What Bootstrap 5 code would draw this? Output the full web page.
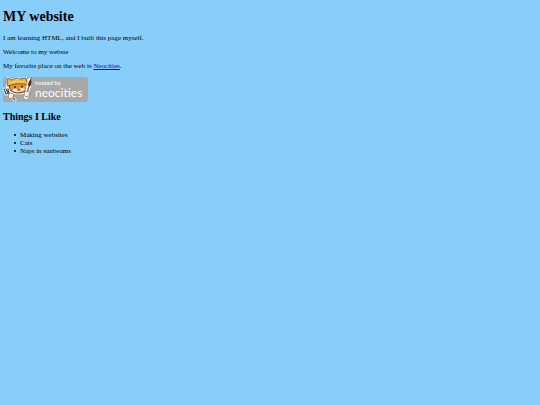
<!DOCTYPE html>
<html lang="en">
<head>
<meta charset="utf-8">
<meta name="viewport" content="width=device-width, initial-scale=1">
<title>MY website</title>
<link href="https://cdn.jsdelivr.net/npm/bootstrap@5.3.0/dist/css/bootstrap.min.css" rel="stylesheet">
<style>
body { background: #87cefa; color: #000; font: 7px/8px "Liberation Serif", "Times New Roman", serif; }
.page-body { padding: 8px 3px; }
h1 { font-size: 14px; line-height: 18px; }
h2 { font-size: 10px; line-height: 12px; }
h1, h2 { color: #000; margin-bottom: 8px; }
p { margin-bottom: 6px; }
.intro a { color: #00e; }
.likes { padding-left: 11px; }
.likes li { gap: 4px; }
.likes li::before { content: ""; width: 2px; height: 2px; border-radius: 1px; background: #000; }
.host-badge { margin: 7px 0 9px; width: 85px; }
.host-badge text { font-family: Lato, sans-serif; fill: #fff; }
</style>
<script src="https://cdn.jsdelivr.net/npm/bootstrap@5.3.0/dist/js/bootstrap.bundle.min.js" defer></script>
</head>
<body>
<main class="page-body">
  <h1 class="fw-bold">MY website</h1>
  <div class="intro">
    <p>I am learning HTML, and I built this page myself.</p>
    <p>Welcome to my webste</p>
    <p>My favorite place on the web is <a href="https://neocities.org">Neocities</a>.</p>
  </div>
  <a class="host-badge d-block" href="https://neocities.org" aria-label="Hosted by Neocities">
    <svg class="d-block w-100" viewBox="0 0 85 25" aria-hidden="true">
      <rect width="85" height="25" rx="3" fill="#a8a8a8"/>
      <text x="32" y="8" font-size="6">hosted by</text>
      <text x="32" y="20" font-size="12">neocities</text>
      <g stroke-linejoin="round" stroke-linecap="round">
        <!-- cat with a helmet -->
        <path d="M5 1 9 3Q14 0 18 2L23 1 24 6 27 10 23 15Q18 17 12 16L6 14 4 9Z" fill="#fff" stroke="#fff" stroke-width="2"/>
        <path d="M6 6 7 13Q10 16 15 16Q22 16 25 11L24 5 22 4 12 5Z" fill="#ed923b" stroke="#4a2a1a" stroke-width=".9"/>
        <path d="M9 13Q12 11 15 12Q19 10 22 12Q20 15 15 15Q12 16 9 13Z" fill="#fff0db"/>
        <path d="M5 9Q3 7 5 1L9 3Q13 0 18 2L23 1 24 5 25 8Q16 5 5 9Z" fill="#e9b63d" stroke="#6b4d18" stroke-width=".8"/>
        <path d="M7 6Q14 3 21 5M12 3 16 2" fill="none" stroke="#ffdf77" stroke-width=".8"/>
        <circle cx="12" cy="10" r=".9" fill="#24170f"/><circle cx="19" cy="9.5" r=".9" fill="#24170f"/>
        <path d="M15 12H17L16 13ZM16 13 14 14M16 13 18 14" fill="#513020" stroke="#513020" stroke-width=".5"/>
        <!-- fork and paintbrush -->
        <path d="M1 12 3 17 6 16 5 12M3 12 5 16 12 23" fill="none" stroke="#fff" stroke-width="3"/>
        <path d="M1 12 3 17 6 16 5 12M3 12 5 16 12 23" fill="none" stroke="#40566c" stroke-width="1.3"/>
        <path d="M27 3 23 20" fill="none" stroke="#fff" stroke-width="4"/>
        <path d="M26 9 23 20" fill="none" stroke="#785044" stroke-width="1.2"/>
        <path d="M28 2Q29 5 27 9L25 8Q26 5 28 2Z" fill="#7c1d30" stroke="#3c2028" stroke-width=".8"/>
        <circle cx="8" cy="19" r="2.8" fill="#fff" stroke="#655044" stroke-width=".5"/>
        <circle cx="24" cy="17" r="2.8" fill="#fff" stroke="#655044" stroke-width=".5"/>
        <path d="M10 19Q10 21 8 21M26 17Q26 19 24 19" fill="none" stroke="#e7b783" stroke-width=".8"/>
      </g>
    </svg>
  </a>
  <h2 class="fw-bold">Things I Like</h2>
  <ul class="likes list-unstyled">
    <li class="d-flex align-items-center">Making websites</li>
    <li class="d-flex align-items-center">Cats</li>
    <li class="d-flex align-items-center">Naps in sunbeams</li>
  </ul>
</main>
</body>
</html>
